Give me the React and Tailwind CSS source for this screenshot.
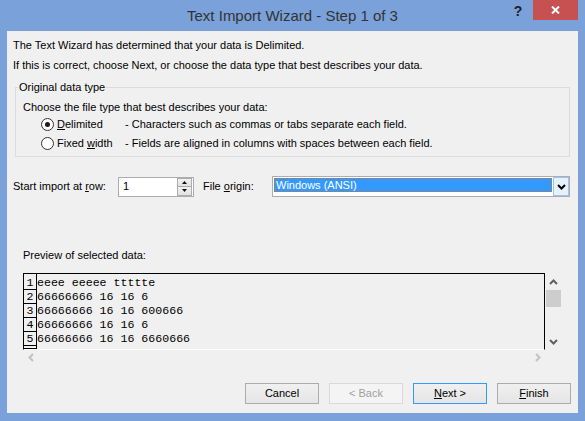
import React from "react";

const previewRows = [
  "eeee eeeee ttttte",
  "66666666 16 16 6",
  "66666666 16 16 600666",
  "66666666 16 16 6",
  "66666666 16 16 6660666",
  "",
];

function Chevron({ dir, color, width = 2 }) {
  const shapes = {
    up: { w: 9, h: 6, d: "M1 5 L4.5 1.5 L8 5" },
    down: { w: 9, h: 6, d: "M1 1 L4.5 4.5 L8 1" },
    left: { w: 6, h: 9, d: "M5 1 L1.5 4.5 L5 8" },
    right: { w: 6, h: 9, d: "M1 1 L4.5 4.5 L1 8" },
  };
  const s = shapes[dir];
  return (
    <svg width={s.w} height={s.h} viewBox={`0 0 ${s.w} ${s.h}`}>
      <path d={s.d} fill="none" stroke={color} strokeWidth={width} />
    </svg>
  );
}

function Radio({ checked }) {
  return (
    <span className="w-[13px] h-[13px] rounded-full border border-[#333333] bg-white flex items-center justify-center shrink-0">
      {checked && <span className="w-[5px] h-[5px] rounded-full bg-[#1a1a1a]" />}
    </span>
  );
}

function DialogButton({ children, variant }) {
  let look = "border-[#acacac] bg-linear-to-b from-[#f0f0f0] to-[#e5e5e5] text-black";
  if (variant === "default") look = "border-[#3399ff] bg-linear-to-b from-[#f0f0f0] to-[#e5e5e5] text-black";
  if (variant === "disabled") look = "border-[#d9d9d9] bg-[#f4f4f4] text-[#a0a0a0]";
  return (
    <div className={`w-[74px] h-[21px] border flex items-center justify-center ${look}`}>
      {children}
    </div>
  );
}

export default function App() {
  return (
    <div className="w-[585px] h-[421px] bg-[#7aa1d9] flex flex-col font-['Liberation_Sans',Arial,sans-serif] text-[11px] leading-[13px] text-black overflow-hidden">
      {/* title bar */}
      <div className="h-[31px] grid grid-cols-[1fr_auto_1fr] shrink-0">
        <div />
        <div className="text-[15px] leading-[31px] text-[#333333]">Text Import Wizard - Step 1 of 3</div>
        <div className="flex justify-end items-start pr-[7px]">
          <span className="mt-[4px] mr-[9px] w-[12px] text-center text-[14px] leading-[15px] font-bold text-[#222222]">?</span>
          <div className="w-[45px] h-[20px] bg-[#c75050] flex items-center justify-center">
            <svg width="9" height="8" viewBox="0 0 9 8">
              <path d="M1 0.5 L8 7.5 M8 0.5 L1 7.5" stroke="#ffffff" strokeWidth="2" />
            </svg>
          </div>
        </div>
      </div>

      {/* client area */}
      <div className="mx-[7px] h-[382px] bg-[#f0f0f0] flex flex-col">
        <p className="mt-[8px] ml-[6px]">The Text Wizard has determined that your data is Delimited.</p>
        <p className="mt-[7px] ml-[6px]">If this is correct, choose Next, or choose the data type that best describes your data.</p>

        <fieldset className="mt-[9px] mx-[8px] border border-[#dcdcdc] pl-[2px] pb-[5px]">
          <legend className="px-[1px]">Original data type</legend>
          <div className="mt-[7px] ml-[5px]">Choose the file type that best describes your data:</div>
          <div className="mt-[3px] h-[15px] ml-[23px] flex items-center">
            <Radio checked />
            <span className="ml-[3px] w-[68px]">
              <u>D</u>elimited
            </span>
            <span>- Characters such as commas or tabs separate each field.</span>
          </div>
          <div className="mt-[4px] h-[15px] ml-[23px] flex items-center">
            <Radio />
            <span className="ml-[3px] w-[68px]">
              Fixed <u>w</u>idth
            </span>
            <span>- Fields are aligned in columns with spaces between each field.</span>
          </div>
        </fieldset>

        {/* start row / file origin */}
        <div className="mt-[19px] flex items-center h-[21px]">
          <span className="ml-[6px] w-[105px]">
            Start import at <u>r</u>ow:
          </span>
          <div className="w-[76px] h-[20px] border border-[#abadb3] bg-white flex items-center">
            <span className="pl-[4px] flex-1">1</span>
            <div className="flex flex-col mr-[1px]">
              <div className="w-[15px] h-[9px] border border-[#acacac] bg-linear-to-b from-[#f2f2f2] to-[#e2e2e2] flex items-center justify-center">
                <svg width="5" height="3" viewBox="0 0 5 3">
                  <path d="M0 3 L2.5 0 L5 3 Z" fill="#111111" />
                </svg>
              </div>
              <div className="w-[15px] h-[9px] border border-t-0 border-[#acacac] bg-linear-to-b from-[#f2f2f2] to-[#e2e2e2] flex items-center justify-center">
                <svg width="5" height="3" viewBox="0 0 5 3">
                  <path d="M0 0 L2.5 3 L5 0 Z" fill="#111111" />
                </svg>
              </div>
            </div>
          </div>
          <span className="ml-[9px] w-[69px]">
            File <u>o</u>rigin:
          </span>
          <div className="w-[298px] h-[21px] border border-[#abadb3] bg-white flex">
            <div className="ml-[1px] mt-[1px] h-[14px] flex-1 bg-[#3399ff] border border-dotted border-[#c9742c] text-white pl-[1px] leading-[12px]">
              Windows (ANSI)
            </div>
            <div className="w-[16px] ml-[1px] bg-[#e5f1fb] border border-[#9fc4ea] flex items-center justify-center">
              <Chevron dir="down" color="#000000" width={2} />
            </div>
          </div>
        </div>

        <div className="mt-[52px] ml-[16px]">Preview of selected data:</div>

        {/* preview */}
        <div className="mt-[11px] ml-[16px] w-[538px] flex flex-col">
          <div className="flex h-[77px]">
            <div className="w-[522px] border border-black border-b-white flex overflow-hidden">
              <div className="w-[13px] pt-[2px] border-r border-black flex flex-col shrink-0">
                {previewRows.map((_, i) => (
                  <div
                    key={i}
                    className="h-[14px] border-b border-black text-center font-['Liberation_Mono',monospace] text-[11.6px] leading-[13px]"
                  >
                    {i < 5 ? i + 1 : ""}
                  </div>
                ))}
              </div>
              <div className="pt-[2px] flex flex-col font-['Liberation_Mono',monospace] text-[11.6px] leading-[14px]">
                {previewRows.map((r, i) => (
                  <div key={i} className="h-[14px] whitespace-pre">
                    {r}
                  </div>
                ))}
              </div>
            </div>
            <div className="w-[16px] flex flex-col">
              <div className="h-[17px] flex items-center justify-center">
                <Chevron dir="up" color="#606060" />
              </div>
              <div className="h-[17px] ml-[1px] bg-[#cdcdcd]" />
              <div className="flex-1" />
              <div className="h-[17px] flex items-center justify-center">
                <Chevron dir="down" color="#606060" />
              </div>
            </div>
          </div>
          <div className="w-[522px] h-[14px] flex items-center justify-between">
            <div className="w-[15px] flex justify-center">
              <Chevron dir="left" color="#c2c2c2" />
            </div>
            <div className="w-[15px] flex justify-center">
              <Chevron dir="right" color="#c2c2c2" />
            </div>
          </div>
        </div>

        {/* buttons */}
        <div className="mt-auto mb-[9px] pr-[7px] flex justify-end gap-[10px]">
          <DialogButton>Cancel</DialogButton>
          <DialogButton variant="disabled">&lt; Back</DialogButton>
          <DialogButton variant="default">
            <span>
              <u>N</u>ext &gt;
            </span>
          </DialogButton>
          <DialogButton>
            <span>
              <u>F</u>inish
            </span>
          </DialogButton>
        </div>
      </div>
    </div>
  );
}
